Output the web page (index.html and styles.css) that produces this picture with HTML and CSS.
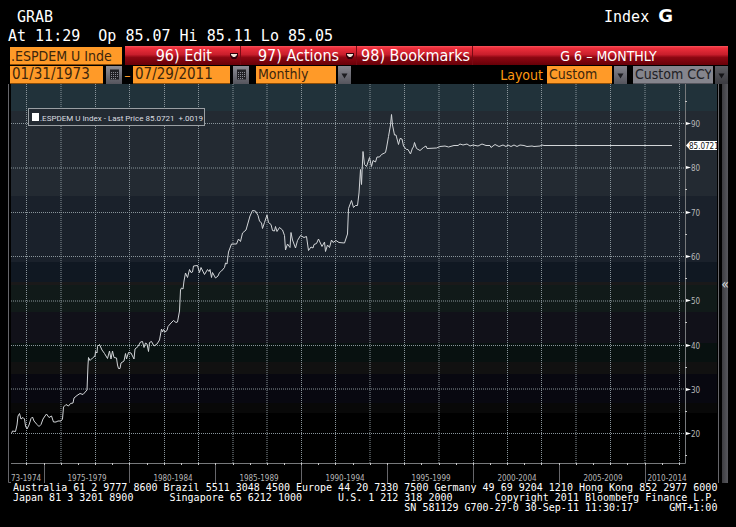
FILE: index.html
```html
<!DOCTYPE html>
<html lang="en">
<head>
<meta charset="utf-8">
<title>ESPDEM U Index - G 6 - Monthly</title>
<link rel="stylesheet" href="styles.css">
</head>
<body>
<svg class="defs" aria-hidden="true">
  <symbol id="calendar" viewBox="0 0 16 17"><path d="M4 3.5h9v10h-9z" fill="#202024"/><path d="M5 6.5h7M5 8.500h7M5 10.500h7M5 12.500h5" stroke="#8a8a92" stroke-dasharray="1 1"/></symbol>
  <symbol id="down" viewBox="0 0 13 17"><path d="M3.500 7h6l-3 5z" fill="#1c1c20"/></symbol>
  <symbol id="menu-down" viewBox="0 0 8 6"><path d="M0 0h8v3l-2 3h-4l-2-3z" fill="#30000a"/><path d="M1 1h6v1L5 4H3L1 2z" fill="#f0e6d8"/></symbol>
</svg>
<header class="terminal">
  <div class="line command"><span>GRAB</span><span class="security">Index <b>G</b></span></div>
  <div class="line quote">At 11:29  Op 85.07 Hi 85.11 Lo 85.05</div>
</header>
<main>
  <nav class="bar menus">
    <input class="field ticker" type="text" aria-label="Security" value=".ESPDEM U Inde">
    <button class="menu" type="button">96) Edit<svg class="caret"><use href="#menu-down"/></svg></button>
    <button class="menu" type="button">97) Actions<svg class="caret"><use href="#menu-down"/></svg></button>
    <button class="menu bookmarks" type="button">98) Bookmarks</button>
    <h1 class="title">G 6 – MONTHLY</h1>
  </nav>
  <form class="bar settings">
    <input class="field from" type="text" aria-label="From" value="01/31/1973">
    <button class="pick" type="button" aria-label="Choose start date"><svg><use href="#calendar"/></svg></button>
    <span class="dash">–</span>
    <input class="field to" type="text" aria-label="To" value="07/29/2011">
    <button class="pick" type="button" aria-label="Choose end date"><svg><use href="#calendar"/></svg></button>
    <div class="choice period"><select class="field" aria-label="Period"><option>Monthly</option></select><svg class="arrow"><use href="#down"/></svg></div>
    <label class="layout-label" for="layout">Layout</label>
    <div class="choice layout"><select class="field" id="layout"><option>Custom</option></select><svg class="arrow"><use href="#down"/></svg></div>
    <div class="choice currency"><select class="field" aria-label="Currency" disabled><option>Custom CCY</option></select><svg class="arrow"><use href="#down"/></svg></div>
  </form>
  <section class="workspace">
    <svg class="chart" viewBox="8 84 711 399" role="img" aria-label="ESPDEM U Index, monthly last price">
      <g class="bands">
        <path fill="#21323a" d="M11 84h706v27H11z"/>
        <path fill="#232a32" d="M11 111h706v85H11z"/>
        <path fill="#1a212b" d="M11 196h706v66H11z"/>
        <path fill="#101822" d="M11 262h706v20H11z"/>
        <path fill="#1a191a" d="M11 282h706v3H11z"/>
        <path fill="#111a19" d="M11 285h706v27H11z"/>
        <path fill="#111119" d="M11 312h706v31H11z"/>
        <path fill="#081110" d="M11 343h706v19H11z"/>
        <path fill="#111111" d="M11 362h706v12H11z"/>
        <path fill="#080810" d="M11 374h706v29H11z"/>
        <path fill="#080808" d="M11 403h706v10H11z"/>
      </g>
      <path class="grid" d="M26.500 84V463M95.500 84V463M129.500 84V463M164.500 84V463M198.500 84V463M301.500 84V463M335.500 84V463M404.500 84V463M473.500 84V463M507.500 84V463M541.500 84V463M610.500 84V463M679.500 84V463M11 123.500H685M11 212.500H685M11 256.500H685M11 345.500H685M11 433.500H685"/>
      <path class="grid" d="M61 84V463M233 84V463M267 84V463M370 84V463M439 84V463M576 84V463M645 84V463M11 168H685M11 301H685M11 389H685"/>
      <path class="frame" d="M11 482.500H8.500V84M718.500 84V483"/>
      <path class="axis" d="M11 463.500H685.500V84"/>
      <path class="divider" d="M44.500 464V483M129.500 464V483M215.500 464V483M301.500 464V483M387.500 464V483M473.500 464V483M559.500 464V483M645.500 464V483"/>
      <path class="ticks" d="M26.500 463v2M44.500 463v2M61.500 463v2M78.500 463v2M95.500 463v2M112.500 463v2M129.500 463v2M147.500 463v2M164.500 463v2M181.500 463v2M198.500 463v2M215.500 463v2M233.500 463v2M250.500 463v2M267.500 463v2M284.500 463v2M301.500 463v2M318.500 463v2M335.500 463v2M353.500 463v2M370.500 463v2M387.500 463v2M404.500 463v2M421.500 463v2M439.500 463v2M456.500 463v2M473.500 463v2M490.500 463v2M507.500 463v2M524.500 463v2M541.500 463v2M559.500 463v2M576.500 463v2M593.500 463v2M610.500 463v2M627.500 463v2M645.500 463v2M662.500 463v2M679.500 463v2M685 101.500h2M685 189.500h2M685 234.500h2M685 278.500h2M685 322.500h2M685 367.500h2M685 411.500h2M685 455.500h2"/>
      <path class="pointers" d="M686 122l5 1.500-5 1.500zM686 166l5 1.500-5 1.500zM686 211l5 1.500-5 1.500zM686 255l5 1.500-5 1.500zM686 299l5 1.500-5 1.500zM686 344l5 1.500-5 1.500zM686 388l5 1.500-5 1.500zM686 432l5 1.500-5 1.500z"/>
      <path class="series" d="M11.500 433.500 12.500 431 15.500 431.500 17 425 18 416 19.500 413.500 21 419 23 417.500 24.500 419 25.500 426 27 429 29 425 31 418.500 32.500 417 34 421 37 424.500 39 426.500 41 424.500 43 419 45 416 46.500 414 49 417.500 51.500 416 53.500 422 56 422 58 421 61 421 62.500 419 63.500 407 66 404.500 68.500 406 70.500 403.500 73 403 74 398 77 395.500 80 393.500 83 394.500 87 390 88 365 88.500 357.500 90 360.500 92.500 358 95 356 95.500 351.500 97 353 97.500 346.500 99.500 344.500 102 350 104.500 353.500 107.500 358.500 109.500 351 111 359 112.500 351 114 357.500 116.500 358 117.500 365 118.500 368.500 120 368.500 121 363 124 361 125.500 353.500 126.500 359 128.500 352.500 131 353 134 359 135 349 138 346.500 140.500 342 142.500 341.500 144 347.500 145.500 343 147 344 148.500 351.500 149.500 342.500 151.500 341.500 154 346 157 344 159.500 340 161.500 329 162.500 332 163.500 329.500 165 332 167 330.500 168 326.500 171 323 173.500 320.500 176 322.500 177.500 322 179.500 311 180.500 290 181.500 288 183 289 184 281 185.500 273 187.500 277.500 189.500 269.500 191 272.500 192.500 272 193.500 266 197.500 265.500 199.500 272.500 201 267.500 204.500 274.500 207.500 269.500 209 271.500 210 269.500 211.500 277.500 212.500 272.500 215.500 278 218 276 219.500 272.500 221.500 271 224.500 267.500 225.500 263 227 264 228.500 252 231.500 244 236.500 244 238.500 239 240.500 241.500 242.500 233 246 230 250 216 252.500 210.500 255.500 211 258 215.500 259.500 221 261.500 223 262.500 228.500 264.500 222.500 267 215 268.500 222.500 271 224.500 272.500 230.500 274.500 231 275.500 226.500 277 231.500 279.500 227.500 282.500 230 284.500 235.500 285.500 250 287.500 244 290 247.500 291 232.500 292.500 240 295.500 248 297.500 240.500 300.500 235.500 304 237.500 306.500 236.500 308.500 250.500 311 247 313 248 314 244.500 316.500 243.500 318.500 239 322 246.500 324.500 242 325.500 251.500 327.500 245 329.500 247.500 331.500 240 333 242.500 336 240.500 339 242.500 344.500 243 347.500 234 348.500 208.500 351.500 200.500 353.500 207.500 355.500 205.500 357.500 205.500 359 193 360.500 169.500 361.500 184.500 363 151.500 364.500 164.500 366.500 166.500 369.500 157.500 371.500 166.500 373 160.500 375.500 162 377 157 379.500 157 381.500 154.500 385.500 152.500 386.500 148 388.500 136.500 390.500 125 391.500 114.500 392.500 125 394.500 135 396 135 398.500 144.500 400 138.500 402 139 403.500 146 406.500 149.500 408 149.500 410.500 154 412.500 148 413.500 147 414.500 142.500 416.500 148.500 420 150.500 423.500 147.500 426 146 427 148.500 436.500 148 440 146.500 445 146 448.500 147 454 145.500 458 145.500 460 144 463 145 467 144 470 146 473 145 478 146 482 144 486 145.500 490 145.500 491 147.500 495 144.500 499 146.500 503 145 506 146.500 508 145 511 146.500 514 145 517 146.500 520 145 524 145.500 527 146.500 532 146 534 146.500 540 146 542 145 544 145.500H672"/>
      <g class="labels">
        <text x="691" y="127">90</text><text x="691" y="171">80</text><text x="691" y="216">70</text><text x="691" y="260">60</text><text x="691" y="304">50</text><text x="691" y="349">40</text><text x="691" y="393">30</text><text x="691" y="437">20</text>
        <text x="11" y="481">73-1974</text>
      </g>
      <g class="labels years">
        <text x="87" y="481">1975-1979</text><text x="173" y="481">1980-1984</text><text x="259" y="481">1985-1989</text><text x="345" y="481">1990-1994</text><text x="431" y="481">1995-1999</text><text x="517" y="481">2000-2004</text><text x="603" y="481">2005-2009</text><text x="667" y="481">2010-2014</text>
      </g>
      <path fill="#fff" d="M686 145.500l4-4.500h27v9h-27z"/>
      <text class="last" x="689" y="149">85.0721</text>
      <g class="legend">
        <rect x="28.500" y="108.500" width="176" height="17"/>
        <path fill="#fff" d="M32 113h7v8h-7z"/>
        <text x="40" y="121">.ESPDEM U Index - Last Price 85.0721  +.0019</text>
      </g>
    </svg>
    <button class="rail" type="button" aria-label="Expand side panel">«</button>
  </section>
</main>
<footer class="contacts">Australia 61 2 9777 8600 Brazil 5511 3048 4500 Europe 44 20 7330 7500 Germany 49 69 9204 1210 Hong Kong 852 2977 6000
Japan 81 3 3201 8900      Singapore 65 6212 1000      U.S. 1 212 318 2000       Copyright 2011 Bloomberg Finance L.P.
                                                                 SN 581129 G700-27-0 30-Sep-11 11:30:17      GMT+1:00</footer>
</body>
</html>
```
FILE: styles.css
```css
* { box-sizing: border-box; }

body {
  margin: 0;
  padding: 8px 8px 0;
  background: #000;
  color: #fff;
  font-family: "DejaVu Sans Condensed", "DejaVu Sans", sans-serif;
}

.defs { position: absolute; width: 0; height: 0; }

.terminal {
  font: 15px/19px "DejaVu Sans Mono", monospace;
}
.line { white-space: pre; }
.command {
  display: flex;
  justify-content: space-between;
  padding: 0 55px 0 9px;
}
.security b { font-family: "DejaVu Sans", sans-serif; font-size: 18px; line-height: 16px; }

.bar {
  display: flex;
  height: 19px;
  padding-left: 2px;
}
input, select, button { margin: 0; border: 0; border-radius: 0; font-family: inherit; }

.field {
  height: 18px;
  padding: 0 2px;
  background: #ff9a28;
  border-bottom: 1px solid #8a4c08;
  color: #3c260c;
  font-size: 14px;
  line-height: 17px;
  appearance: none;
  outline: 0;
}
.ticker { width: 112px; margin: 1px 3px 0 0; padding: 0 1px; }

.menu, .title {
  background: linear-gradient(#f8545c 0, #ee2f3b 10%, #c81e2c 45%, #8c0712 60%, #680008 100%);
  color: #fff;
}
.menu {
  display: flex;
  align-items: center;
  justify-content: flex-end;
  gap: 18px;
  width: 116px;
  padding: 0 2px 0 0;
  border-right: 1px solid #7a0a14;
  font-size: 16px;
  line-height: 18px;
  white-space: nowrap;
}
.menu + .menu { gap: 7px; }
.caret { width: 8px; height: 6px; }
.title {
  flex: 1;
  margin: 0;
  padding-left: 16px;
  font-size: 14px;
  font-weight: 400;
  line-height: 20px;
  text-align: center;
}

.settings { align-items: center; }
.from { width: 93px; font-size: 15px; }
.to { width: 97px; font-size: 15px; }
.pick {
  width: 16px;
  height: 18px;
  margin-left: 3px;
  padding: 0;
  background: linear-gradient(#8c8c94, #55555d);
}
.pick svg { display: block; width: 16px; height: 17px; }
.dash { width: 11px; color: #ff9a28; font-size: 14px; line-height: 18px; text-align: center; }
.choice { display: flex; gap: 2px; }
.arrow { width: 13px; height: 18px; background: linear-gradient(#85858d, #55555d); }
.period { margin-left: 7px; }
.period select { width: 80px; }
.layout-label { margin-left: auto; padding-right: 4px; color: #ff9a10; font-size: 14px; line-height: 18px; }
.layout select { width: 65px; }
.currency { margin-left: 6px; }
.currency select { width: 80px; background: #85858d; border-color: #55555d; color: #202024; opacity: 1; }
.currency .arrow { opacity: .7; }

.workspace { display: flex; }
.chart { display: block; flex: 1; min-width: 0; }
.grid { fill: none; stroke: #89949a; stroke-dasharray: 1 1; }
.frame { fill: none; stroke: #66666a; }
.axis { fill: none; stroke: #77797b; }
.divider { stroke: #66666a; }
.ticks { stroke: #c8c8c8; }
.pointers { fill: #fff; }
.series { fill: none; stroke: #d2d5d8; stroke-linejoin: round; }
.chart text { font: 8px "DejaVu Sans Condensed", sans-serif; white-space: pre; }
.labels { fill: #b8b8b8; }
.years { text-anchor: middle; }
.chart .last { fill: #111; }
.legend rect { fill: #232a32; stroke: #9a9fa3; }
.chart .legend text { fill: #dcdee0; font-family: Roboto, sans-serif; }
.rail {
  display: flex;
  align-items: center;
  justify-content: center;
  width: 6px;
  margin-left: 3px;
  padding: 0;
  background: linear-gradient(90deg, #3c3c40, #58585e);
  color: #ddd;
  font-size: 14px;
}

.contacts {
  padding-left: 5px;
  font: 10px/10px "DejaVu Sans Mono", monospace;
  white-space: pre;
}
```
